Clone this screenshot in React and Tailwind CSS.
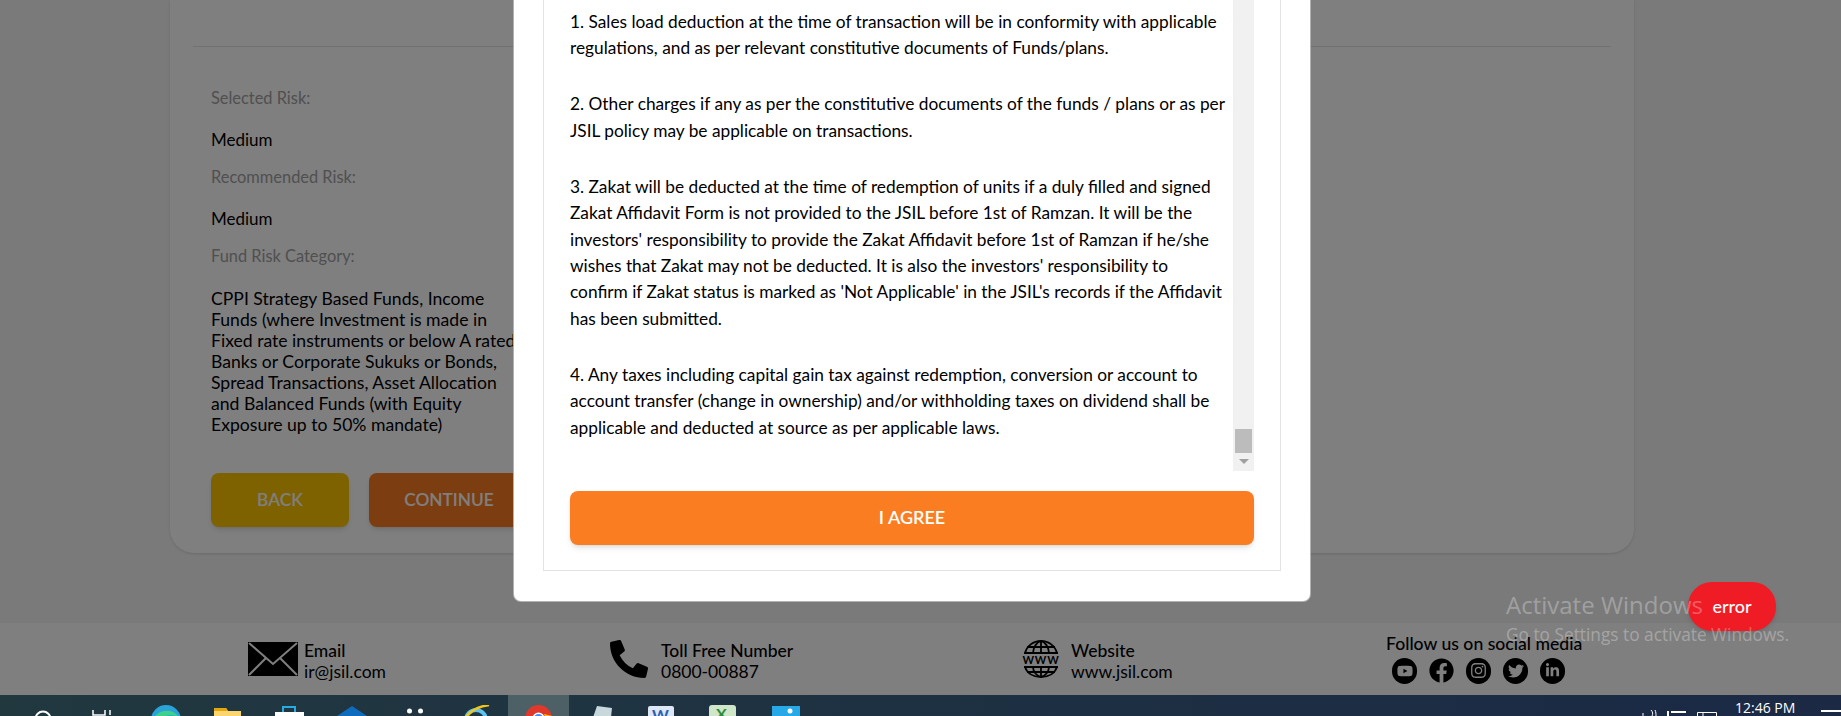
import React from 'react';
import { FaYoutube, FaFacebook, FaInstagram, FaTwitter, FaLinkedinIn, FaPhoneAlt } from 'react-icons/fa';

const terms = [
  ['1. Sales load deduction at the time of transaction will be in conformity with applicable', 'regulations, and as per relevant constitutive documents of Funds/plans.'],
  ['2. Other charges if any as per the constitutive documents of the funds / plans or as per', 'JSIL policy may be applicable on transactions.'],
  [
    '3. Zakat will be deducted at the time of redemption of units if a duly filled and signed',
    'Zakat Affidavit Form is not provided to the JSIL before 1st of Ramzan. It will be the',
    "investors' responsibility to provide the Zakat Affidavit before 1st of Ramzan if he/she",
    "wishes that Zakat may not be deducted. It is also the investors' responsibility to",
    "confirm if Zakat status is marked as 'Not Applicable' in the JSIL's records if the Affidavit",
    'has been submitted.',
  ],
  ['4. Any taxes including capital gain tax against redemption, conversion or account to', 'account transfer (change in ownership) and/or withholding taxes on dividend shall be', 'applicable and deducted at source as per applicable laws.'],
];

const fundLines = [
  'CPPI Strategy Based Funds, Income',
  'Funds (where Investment is made in',
  'Fixed rate instruments or below A rated',
  'Banks or Corporate Sukuks or Bonds,',
  'Spread Transactions, Asset Allocation',
  'and Balanced Funds (with Equity',
  'Exposure up to 50% mandate)',
];

const Label = ({ children }) => <div className="text-[16.4px] leading-[21px] text-[#a0a0a0]">{children}</div>;
const Value = ({ children }) => <div className="mt-[21px] mb-[16px] text-[17px] leading-[21px] text-black">{children}</div>;

const Contact = ({ icon, title, value, className }) => (
  <div className={`flex items-center shrink-0 ${className}`}>
    {icon}
    <div className="text-[17.5px] leading-[21px] text-black pt-[3px]">
      <div className="font-medium">{title}</div>
      <div>{value}</div>
    </div>
  </div>
);

const EnvelopeIcon = () => (
  <svg width="50" height="34" viewBox="0 0 50 34" className="mr-[6px]">
    <rect width="50" height="34" fill="#000" />
    <path d="M1 1 L25 22 L49 1 M1 33 L18 16 M49 33 L32 16" stroke="#fff" strokeWidth="2" fill="none" />
  </svg>
);

const GlobeIcon = () => (
  <svg width="38" height="38" viewBox="0 0 38 38" className="mr-[11px]">
    <g fill="none" stroke="#000" strokeWidth="1.8">
      <path d="M3 13 C5 6 11 1 19 1 C27 1 33 6 35 13" />
      <path d="M3 27 C5 33 11 37 19 37 C27 37 33 33 35 27" />
      <path d="M11 13 C11 7 15 2 19 1 C23 2 27 7 27 13 M19 1 V13 M11 27 C11 32 15 36 19 37 C23 36 27 32 27 27 M19 27 V37" />
      <path d="M5 7 H33 M2 13 H36 M2 27 H36 M5 32 H33" />
    </g>
    <text x="19" y="24" textAnchor="middle" fontSize="11" fontWeight="700" letterSpacing="0.8" fill="#000">WWW</text>
  </svg>
);

const Social = ({ Icon, size = 15 }) => (
  <span className="flex w-[25px] h-[26px] rounded-full bg-black items-center justify-center text-white shrink-0">
    <Icon size={size} />
  </span>
);

const Risk = () => (
  <div className="pl-[18px] pt-[40px]">
    <Label>Selected Risk:</Label>
    <Value>Medium</Value>
    <Label>Recommended Risk:</Label>
    <Value>Medium</Value>
    <Label>Fund Risk Category:</Label>
    <div className="mt-[22px] text-[17.6px] leading-[21px] text-black whitespace-nowrap">
      {fundLines.map((line) => (
        <div key={line}>{line}</div>
      ))}
    </div>
    <div className="flex gap-[20px] mt-[38px]">
      <button type="button" className="w-[138px] h-[54px] rounded-[8px] bg-[#ffc400] text-white font-semibold text-[17.3px] shadow-md">BACK</button>
      <button type="button" className="w-[160px] h-[54px] rounded-[8px] bg-[#f97d20] text-white font-semibold text-[17.3px] shadow-md">CONTINUE</button>
    </div>
  </div>
);

// Modal is taller than the window, its top runs off the page like in a scrolled dialog
const TermsModal = () => (
  <div className="w-[798px] h-[640px] shrink-0 bg-white rounded-[8px] border border-black/30 border-t-0 px-[29px] pb-[30px]">
    <div className="h-full border border-[#e3e3e3] border-t-0 px-[26px] pb-[25px] flex flex-col justify-end">
      <div className="flex h-[510px] overflow-hidden">
        <div className="flex-1 flex flex-col justify-end pb-[30px] text-[17.3px] leading-[26.4px] text-black whitespace-nowrap">
          {terms.map((para, i) => (
            <div key={i} className={i < terms.length - 1 ? 'mb-[29.6px]' : ''}>
              {para.map((line) => (
                <div key={line}>{line}</div>
              ))}
            </div>
          ))}
        </div>
        <div className="w-[21px] bg-[#f1f1f1] flex flex-col justify-end items-center pb-[7px]">
          <div className="w-[17px] h-[24px] bg-[#bcbcbc] mb-[6px]" />
          <div className="w-0 h-0 border-x-[5px] border-x-transparent border-t-[5px] border-t-[#a0a0a0]" />
        </div>
      </div>
      <button type="button" className="mt-[20px] h-[54px] w-full shrink-0 rounded-[8px] bg-[#fb7d22] text-white font-semibold text-[18px] pb-[2px] shadow-md">I AGREE</button>
    </div>
  </div>
);

const TaskIcon = ({ left, top, width, children }) => (
  <div className="shrink-0" style={{ marginLeft: left, marginTop: top, width }}>
    {children}
  </div>
);

const Taskbar = () => (
  <div className="h-[21px] shrink-0 overflow-hidden relative flex bg-gradient-to-r from-[#21383f] to-[#1b2945] text-white">
    <TaskIcon left={34} top={15} width={18}>
      <svg width="18" height="18"><circle cx="9" cy="9" r="7.5" fill="none" stroke="#fff" strokeWidth="2" /></svg>
    </TaskIcon>
    <TaskIcon left={40} top={15} width={20}>
      <svg width="20" height="16"><path d="M1 0 V5 H13 V0" fill="none" stroke="#fff" strokeWidth="1.5" /><path d="M18 0 V5" stroke="#fff" strokeWidth="1.5" /></svg>
    </TaskIcon>
    <TaskIcon left={39} top={10} width={30}>
      <svg width="30" height="30"><circle cx="15" cy="15" r="15" fill="#2aa4d8" /><path d="M2 15 C6 3 24 3 28 13 C24 9 12 9 10 15 Z" fill="#3fd08a" /></svg>
    </TaskIcon>
    <TaskIcon left={33} top={13} width={27}>
      <svg width="27" height="24"><path d="M0 0 H12 L14 3 H27 V24 H0 Z" fill="#fbd66e" /><path d="M0 0 H12 L14 3 H0 Z" fill="#e5a50c" /></svg>
    </TaskIcon>
    <TaskIcon left={34} top={11} width={29}>
      <svg width="29" height="24"><rect y="6" width="29" height="18" fill="#fff" /><path d="M8 6 V1 H20 V6" fill="none" stroke="#29abe2" strokeWidth="2" /></svg>
    </TaskIcon>
    <TaskIcon left={33} top={11} width={30}>
      <svg width="30" height="24"><path d="M15 0 L30 10 V24 H0 V10 Z" fill="#0f6cbd" /><rect x="5" y="10" width="20" height="14" fill="#d6e6f5" /></svg>
    </TaskIcon>
    <TaskIcon left={40} top={13} width={16}>
      <svg width="16" height="16"><circle cx="2.5" cy="3" r="2.5" fill="#fff" /><circle cx="13.5" cy="3" r="2.5" fill="#fff" /></svg>
    </TaskIcon>
    <TaskIcon left={41} top={10} width={26}>
      <svg width="26" height="26"><circle cx="12" cy="15" r="10" fill="none" stroke="#5ec3ef" strokeWidth="4" /><path d="M2 12 C8 4 18 1 25 0" fill="none" stroke="#f5c518" strokeWidth="2.5" /></svg>
    </TaskIcon>
    <div className="ml-[18px] w-[61px] h-full bg-[#4d6066] shrink-0 flex justify-center pt-[10px]">
      <svg width="27" height="27">
        <circle cx="13.5" cy="13.5" r="13.5" fill="#e0392c" />
        <path d="M19 9 L27 11 A13.5 13.5 0 0 1 24 22 Z" fill="#f5c518" />
        <circle cx="13.5" cy="13.5" r="6" fill="#fff" />
        <circle cx="13.5" cy="13.5" r="4.5" fill="#4a8af4" />
      </svg>
    </div>
    <TaskIcon left={21} top={11} width={22}>
      <svg width="22" height="20"><path d="M7 0 L22 2 L20 20 H0 Z" fill="#c9d8dc" /></svg>
    </TaskIcon>
    <TaskIcon left={36} top={11} width={26}>
      <div className="h-[20px] rounded-t-[2px] bg-[#dde7f5] pl-[4px] text-[16px] leading-[17px] font-bold text-[#2b5fb0]">W</div>
    </TaskIcon>
    <TaskIcon left={35} top={10} width={27}>
      <div className="h-[20px] rounded-t-[3px] bg-[#cfe6c9] pl-[7px] text-[16px] leading-[17px] font-bold text-[#2e8b3d]">X</div>
    </TaskIcon>
    <TaskIcon left={36} top={11} width={28}>
      <svg width="28" height="20"><rect width="28" height="20" fill="#27a9e8" /><circle cx="18" cy="5" r="2.5" fill="#fff" /></svg>
    </TaskIcon>
    <div className="ml-auto flex items-start shrink-0">
      <svg width="18" height="6" className="mt-[15px] mr-[10px]"><path d="M4 6 V3 M12 0 C14 2 14 4 13 6 M16 0 C17 2 17 4 17 6" stroke="#fff" fill="none" /></svg>
      <svg width="20" height="6" className="mt-[15px] mr-[10px]"><path d="M1 6 V1 M4 2 H19" stroke="#fff" strokeWidth="2" fill="none" /></svg>
      <svg width="20" height="6" className="mt-[17px] mr-[18px]"><path d="M0.5 6 V0.5 H19.5 V6 M6 0.5 V6" stroke="#fff" fill="none" /></svg>
      <div className="text-[14px] leading-[18px] mt-[4px] w-[58px] whitespace-nowrap font-['Open_Sans',sans-serif]">12:46 PM</div>
      <div className="ml-[28px] w-[20px] h-[20px] mt-[15px] border-t-2 border-white" />
    </div>
  </div>
);

const App = () => (
  <div className="relative w-[1841px] h-[716px] overflow-hidden flex flex-col font-['Lato',sans-serif]">
    <div className="relative h-[695px] shrink-0 bg-[#f4f4f4]">
      <div className="h-[623px] pl-[170px] pr-[207px]">
        <div className="h-[553px] bg-white rounded-b-[24px] px-[23px] pt-[46px] shadow-sm">
          <hr className="border-t border-[#e4e4e4]" />
          <Risk />
        </div>
      </div>
      <div className="h-[72px] bg-white flex items-center pl-[248px]">
        <Contact className="w-[362px]" icon={<EnvelopeIcon />} title="Email" value="ir@jsil.com" />
        <Contact className="w-[412px]" icon={<FaPhoneAlt size={38} className="mr-[13px] text-black" />} title="Toll Free Number" value="0800-00887" />
        <Contact className="w-[364px]" icon={<GlobeIcon />} title="Website" value="www.jsil.com" />
        <div className="shrink-0 pb-[1px]">
          <div className="text-[17.6px] leading-[20px] font-medium text-black">Follow us on social media</div>
          <div className="flex gap-[12px] pl-[6px] mt-[4px]">
            <Social Icon={FaYoutube} size={16} />
            <span className="flex w-[25px] h-[26px] items-center justify-center text-black shrink-0"><FaFacebook size={25} /></span>
            <Social Icon={FaInstagram} size={17} />
            <Social Icon={FaTwitter} size={16} />
            <Social Icon={FaLinkedinIn} />
          </div>
        </div>
      </div>
      <div className="absolute inset-0 bg-black/50 flex justify-center items-end overflow-hidden pb-[93px] pr-[17px]">
        <TermsModal />
      </div>
    </div>
    <Taskbar />
    <div className="absolute left-[1688px] top-[582px] w-[88px] h-[49px] rounded-[24px] bg-[#ef1c26] text-white text-[18px] font-medium flex items-center justify-center shadow-md">error</div>
    <div className="absolute left-[1506px] top-[588px] text-white/30 font-['Open_Sans',sans-serif] pointer-events-none whitespace-nowrap">
      <div className="text-[24px] leading-[34px]">Activate Windows</div>
      <div className="text-[17.3px] leading-[22px] mt-[2px]">Go to Settings to activate Windows.</div>
    </div>
  </div>
);

export default App;
